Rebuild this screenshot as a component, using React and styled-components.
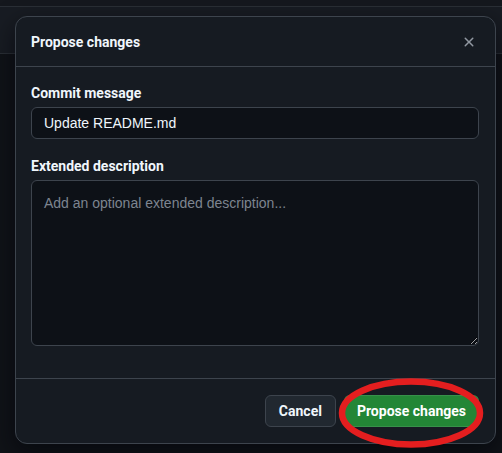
import React from 'react';
import styled, { createGlobalStyle } from 'styled-components';

const GlobalStyle = createGlobalStyle`
  html, body {
    margin: 0;
    padding: 0;
    background: #101318;
  }
  body {
    font-family: 'Liberation Sans', 'Noto Sans', sans-serif;
    color: #f0f6fc;
  }
`;

const boldFont = `'Roboto', 'Liberation Sans', sans-serif`;

const Page = styled.div`
  position: relative;
  width: 502px;
  height: 453px;
  overflow: hidden;
  background: #101318;
`;

const TopStrip = styled.div`
  height: 6px;
  background: #15181e;
  border-bottom: 1px solid #2a2f36;
`;

const HeaderBand = styled.div`
  height: 46px;
  background: #181c23;
  border-bottom: 1px solid #2a2f36;
`;

const Dialog = styled.div`
  position: absolute;
  left: 15px;
  top: 16px;
  width: 481px;
  height: 428px;
  box-sizing: border-box;
  display: flex;
  flex-direction: column;
  background: #161b22;
  border: 1px solid #3d444d;
  border-radius: 12px;
  box-shadow: 0 8px 24px rgba(1, 4, 9, 0.6);
`;

const DialogHeader = styled.div`
  height: 50px;
  box-sizing: border-box;
  display: flex;
  align-items: center;
  justify-content: space-between;
  padding: 1px 14px 0 15px;
  border-bottom: 1px solid #3d444d;
`;

const Title = styled.h1`
  margin: 0;
  font-family: ${boldFont};
  font-size: 14px;
  font-weight: 700;
  line-height: 20px;
  color: #f0f6fc;
`;

const CloseButton = styled.button`
  width: 24px;
  height: 24px;
  display: flex;
  align-items: center;
  justify-content: center;
  padding: 0;
  border: 0;
  background: transparent;
  color: #9198a1;
  cursor: pointer;
`;

const Body = styled.div`
  flex: 1;
  padding: 16px 16px 0 15px;
`;

const Field = styled.div`
  display: flex;
  flex-direction: column;
  margin-bottom: 17px;
`;

const Label = styled.label`
  font-family: ${boldFont};
  font-size: 14px;
  font-weight: 700;
  line-height: 20px;
  margin-bottom: 4px;
  color: #f0f6fc;
`;

const TextInput = styled.input`
  height: 32px;
  box-sizing: border-box;
  padding: 0 12px;
  font-family: inherit;
  font-size: 14px;
  color: #f0f6fc;
  background: #0d1117;
  border: 1px solid #3d444d;
  border-radius: 6px;
  outline: none;
`;

const TextArea = styled.textarea`
  height: 166px;
  box-sizing: border-box;
  padding: 12px 12px 8px;
  font-family: inherit;
  font-size: 14px;
  line-height: 20px;
  color: #f0f6fc;
  background: #0d1117;
  border: 1px solid #3d444d;
  border-radius: 6px;
  outline: none;
  resize: vertical;

  &::placeholder {
    color: #7d8590;
  }
`;

const Footer = styled.div`
  position: relative;
  display: flex;
  justify-content: flex-end;
  gap: 8px;
  padding: 16px 16px 16px 15px;
  border-top: 1px solid #3d444d;
`;

const Button = styled.button`
  height: 32px;
  padding: 0 ${({ $primary }) => ($primary ? '12px' : '13px')};
  font-family: ${boldFont};
  font-size: 14px;
  font-weight: 700;
  color: ${({ $primary }) => ($primary ? '#ffffff' : '#f0f6fc')};
  background: ${({ $primary }) => ($primary ? '#238636' : '#212830')};
  border: 1px solid ${({ $primary }) => ($primary ? 'rgba(240,246,252,0.1)' : '#3d444d')};
  border-radius: 6px;
  cursor: pointer;
`;

const Annotation = styled.svg`
  position: absolute;
  left: 321px;
  top: -2px;
  pointer-events: none;
`;

function CloseIcon() {
  return (
    <svg width="16" height="16" viewBox="0 0 16 16" fill="currentColor">
      <path d="M3.72 3.72a.75.75 0 0 1 1.06 0L8 6.94l3.22-3.22a.749.749 0 0 1 1.275.326.749.749 0 0 1-.215.734L9.06 8l3.22 3.22a.749.749 0 0 1-.326 1.275.749.749 0 0 1-.734-.215L8 9.06l-3.22 3.22a.751.751 0 0 1-1.042-.018.751.751 0 0 1-.018-1.042L6.94 8 3.72 4.78a.75.75 0 0 1 0-1.06Z" />
    </svg>
  );
}

export default function App() {
  return (
    <Page>
      <GlobalStyle />
      <TopStrip />
      <HeaderBand />
      <Dialog>
        <DialogHeader>
          <Title>Propose changes</Title>
          <CloseButton aria-label="Close">
            <CloseIcon />
          </CloseButton>
        </DialogHeader>
        <Body>
          <Field>
            <Label>Commit message</Label>
            <TextInput defaultValue="Update README.md" />
          </Field>
          <Field>
            <Label>Extended description</Label>
            <TextArea placeholder="Add an optional extended description..." />
          </Field>
        </Body>
        <Footer>
          <Button>Cancel</Button>
          <Button $primary>Propose changes</Button>
          <Annotation width="150" height="72" viewBox="0 0 150 72">
            <ellipse cx="74" cy="36" rx="69" ry="31.5" fill="none" stroke="#e41e1f" strokeWidth="6.5" />
          </Annotation>
        </Footer>
      </Dialog>
    </Page>
  );
}
